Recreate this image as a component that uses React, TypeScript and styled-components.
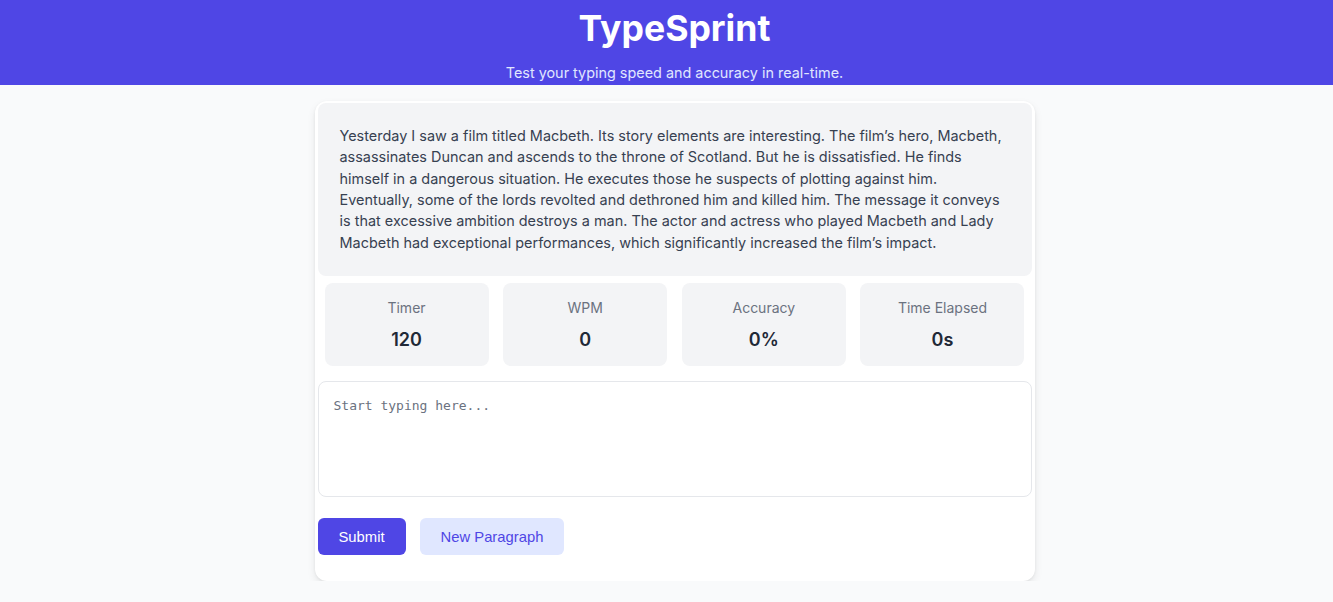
import React from "react";
import styled, { createGlobalStyle } from "styled-components";

const Global = createGlobalStyle`
  html, body { margin: 0; padding: 0; background: #f9fafb; }
  body { font-family: Inter, "Noto Sans", sans-serif; }
  * { box-sizing: border-box; }
`;

const Header = styled.header`
  background: #4f46e5;
  height: 85px;
  display: flex;
  flex-direction: column;
  align-items: center;
  padding: 6px 0 0 16px;
`;

const Title = styled.h1`
  margin: 0;
  color: #ffffff;
  font-size: 35.6px;
  font-weight: 700;
  line-height: 46px;
`;

const Subtitle = styled.p`
  margin: 12px 0 0;
  color: #e0e7ff;
  font-size: 14.4px;
  line-height: 18px;
`;

const Main = styled.main`
  display: flex;
  justify-content: center;
  padding: 16px 0 0 16px;
`;

const Card = styled.section`
  width: 720px;
  background: #ffffff;
  border-radius: 12px;
  box-shadow: 0 4px 8px rgba(0, 0, 0, 0.08), 0 1px 3px rgba(0, 0, 0, 0.06);
  padding: 2px 3px 26px;
  display: flex;
  flex-direction: column;
`;

const Passage = styled.div`
  background: #f3f4f6;
  border-radius: 8px;
  padding: 22px 22px 23px;
  color: #374151;
  font-size: 14.45px;
  line-height: 21.35px;
`;

const Stats = styled.div`
  display: grid;
  grid-template-columns: repeat(4, 164px);
  justify-content: space-between;
  padding: 0 7px;
  margin-top: 7px;
`;

const Stat = styled.div`
  background: #f3f4f6;
  border-radius: 8px;
  height: 83px;
  display: flex;
  flex-direction: column;
  align-items: center;
  padding-top: 16px;
`;

const StatLabel = styled.span`
  color: #6b7280;
  font-size: 14px;
  line-height: 17px;
`;

const StatValue = styled.span`
  color: #1f2937;
  font-size: 18px;
  font-weight: 600;
  line-height: 22px;
  margin-top: 13px;
`;

const Input = styled.textarea`
  margin-top: 15px;
  height: 116px;
  border: 1px solid #e5e7eb;
  border-radius: 8px;
  padding: 14px 15px;
  resize: none;
  font-family: "DejaVu Sans Mono", monospace;
  font-size: 13px;
  line-height: 20px;
  color: #374151;
  outline: none;
  &::placeholder { color: #6b7280; }
`;

const Actions = styled.div`
  display: flex;
  gap: 14px;
  margin-top: 21px;
`;

const Button = styled.button<{ $variant: "primary" | "secondary" }>`
  height: 37px;
  padding: 0 21px;
  border: none;
  border-radius: 6px;
  font-family: "Liberation Sans", Arial, sans-serif;
  font-size: 14.8px;
  cursor: pointer;
  background: ${(p) => (p.$variant === "primary" ? "#4f46e5" : "#e0e7ff")};
  color: ${(p) => (p.$variant === "primary" ? "#ffffff" : "#4f46e5")};
`;

const stats = [
  { label: "Timer", value: "120" },
  { label: "WPM", value: "0" },
  { label: "Accuracy", value: "0%" },
  { label: "Time Elapsed", value: "0s" },
];

export default function App() {
  return (
    <>
      <Global />
      <Header>
        <Title>TypeSprint</Title>
        <Subtitle>Test your typing speed and accuracy in real-time.</Subtitle>
      </Header>
      <Main>
        <Card>
          <Passage>
            Yesterday I saw a film titled Macbeth. Its story elements are interesting. The film’s hero, Macbeth,
            assassinates Duncan and ascends to the throne of Scotland. But he is dissatisfied. He finds
            himself in a dangerous situation. He executes those he suspects of plotting against him.
            Eventually, some of the lords revolted and dethroned him and killed him. The message it conveys
            is that excessive ambition destroys a man. The actor and actress who played Macbeth and Lady
            Macbeth had exceptional performances, which significantly increased the film’s impact.
          </Passage>
          <Stats>
            {stats.map((s) => (
              <Stat key={s.label}>
                <StatLabel>{s.label}</StatLabel>
                <StatValue>{s.value}</StatValue>
              </Stat>
            ))}
          </Stats>
          <Input placeholder="Start typing here..." />
          <Actions>
            <Button $variant="primary">Submit</Button>
            <Button $variant="secondary">New Paragraph</Button>
          </Actions>
        </Card>
      </Main>
    </>
  );
}
